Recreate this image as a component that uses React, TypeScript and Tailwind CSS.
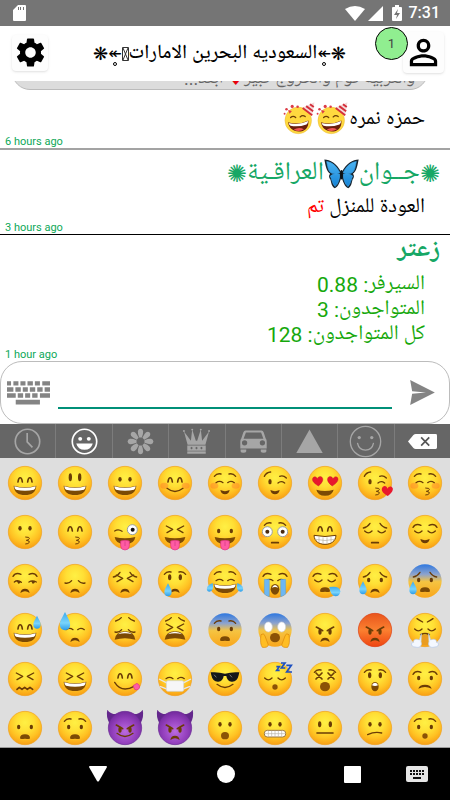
import { useState } from "react";
import type { ReactNode } from "react";
import { MdPersonOutline, MdSettings } from "react-icons/md";

const DARK = "#6b3c06";

const line = { fill: "none", stroke: DARK, strokeWidth: 4, strokeLinecap: "round" as const, strokeLinejoin: "round" as const };

const dots = (y: number, ry = 7, dx = 15) => (
  <g fill={DARK}>
    <ellipse cx={-dx} cy={y} rx="5" ry={ry} />
    <ellipse cx={dx} cy={y} rx="5" ry={ry} />
  </g>
);

const eyes: Record<string, ReactNode> = {
  arcs: <path {...line} strokeWidth="5" d="M-21 -3C-19 -20 -10 -20 -8 -3M8 -3C10 -20 19 -20 21 -3" />,
  tall: dots(-17, 12, 14),
  dots: dots(-11),
  low: dots(-3, 7, 19),
  oval: dots(-11, 9, 16),
  flat: <path {...line} d="M-27 -1Q-16 -9 -6 -1M8 -1Q17 -9 28 -1" />,
  shut: <path {...line} d="M-31 -3Q-20 8 -9 -3M9 -3Q20 8 31 -3" />,
  squint: <path {...line} d="M-26 -18L-7 -8L-24 2M26 -18L7 -8L24 2" />,
  cross: <path {...line} strokeWidth="5" d="M-27 -18L-9 0M-9 -18L-27 0M9 -18L27 0M27 -18L9 0" />,
  wink: (
    <g>
      <ellipse cx="-15" cy="-4" rx="5" ry="8" fill={DARK} />
      <path {...line} d="M9 0Q18 -8 29 0" />
    </g>
  ),
  side: (
    <g>
      <path {...line} d="M-32 3Q-22 -5 -11 4M12 3Q22 -4 34 3" />
      <path fill={DARK} d="M-25 0h13q-2 9 -8 8zM18 0h13q-2 9 -8 8z" />
    </g>
  ),
  sad: <path {...line} d="M-30 6Q-18 9 -10 -1M10 -1Q18 9 30 6" />,
  angry: (
    <g>
      {dots(5, 9, 15)}
      <path {...line} strokeWidth="5" d="M-26 -9Q-14 -3 -7 2M26 -9Q14 -3 7 2" />
    </g>
  ),
  hearts: (
    <g fill="#e8182d" stroke="#b90e20" strokeWidth="1">
      <path d="M-20 9C-35 0 -42 -9 -35 -17C-30 -22 -24 -17 -23 -13C-20 -20 -12 -22 -8 -16C-3 -8 -11 2 -20 9Z" />
      <path d="M22 9C36 0 43 -9 37 -17C32 -22 26 -17 24 -13C21 -20 13 -22 9 -16C4 -8 12 2 22 9Z" />
    </g>
  ),
  crazy: (
    <g>
      <path {...line} d="M-31 -3Q-20 -10 -9 -2" />
      <circle cx="22" cy="-7" r="15" fill="#fff" stroke="#9aa0a0" strokeWidth="3" />
      <circle cx="23" cy="-7" r="6" fill="#111" />
    </g>
  ),
  wide: (
    <g>
      <circle cx="-23" cy="-1" r="15" fill="#fff" stroke="#9aa0a0" strokeWidth="3" />
      <circle cx="23" cy="-1" r="15" fill="#fff" stroke="#9aa0a0" strokeWidth="3" />
      <circle cx="-23" cy="-1" r="6" fill="#4a2a10" />
      <circle cx="23" cy="-1" r="6" fill="#4a2a10" />
    </g>
  ),
  scared: (
    <g fill="#fff" stroke="#c9cfd8" strokeWidth="2">
      <ellipse cx="-20" cy="-9" rx="12" ry="15" />
      <ellipse cx="20" cy="-9" rx="12" ry="15" />
    </g>
  ),
};

const brows: Record<string, ReactNode> = {
  up: <path {...line} d="M-32 -20Q-24 -30 -12 -27M12 -27Q24 -30 32 -20" />,
  round: <path {...line} d="M-36 -14Q-28 -27 -12 -20M12 -20Q28 -27 36 -14" />,
  wink: <path {...line} d="M-32 -20Q-26 -32 -13 -33M14 -20Q25 -24 34 -15" />,
  sad: <path {...line} d="M-35 -12Q-23 -14 -15 -26M15 -26Q23 -14 35 -12" />,
  pain: <path {...line} d="M-28 -27Q-18 -29 -11 -37M28 -27Q18 -29 11 -37" />,
  frown: <path {...line} d="M-24 -34Q-16 -29 -7 -24M24 -34Q16 -29 7 -24" />,
};

const mouths: Record<string, ReactNode> = {
  big: (
    <g>
      <path fill="#7c4a05" d="M-34 8Q0 18 34 8C33 28 19 36 0 36C-19 36 -33 28 -34 8Z" />
      <path fill="#fff" d="M-32 10Q0 19 32 10Q32 17 27 20Q0 26 -27 20Q-32 17 -32 10Z" />
    </g>
  ),
  grin: (
    <g>
      <path fill="#fff" stroke={DARK} strokeWidth="3" d="M-33 10Q0 17 33 10C32 28 18 37 0 37C-18 37 -32 28 -33 10Z" />
      <path stroke="#b9b19f" strokeWidth="2" fill="none" d="M-29 22Q0 29 29 22M-18 14V32M-6 16V35M6 16V35M18 14V32" />
    </g>
  ),
  smile: <path {...line} d="M-24 16Q0 35 24 16" />,
  small: <path fill={DARK} d="M-14 21Q0 28 14 21Q11 34 0 34Q-11 34 -14 21Z" />,
  open: <path fill="#7c4a05" d="M-26 20Q0 28 26 20Q22 38 0 38Q-22 38 -26 20Z" />,
  kiss: <path {...line} strokeWidth="3" d="M2 15Q15 15 13 20Q11 24 4 25Q15 26 13 31Q10 36 2 36" />,
  tongue: (
    <g>
      <path fill="#7c4a05" d="M-31 15Q0 23 31 15Q28 37 0 37Q-28 37 -31 15Z" />
      <path fill="#ff5ba4" stroke="#dc3482" strokeWidth="2" d="M-13 27Q0 23 13 27V42Q12 54 0 54Q-12 54 -13 42Z" />
      <path stroke="#cf3a80" strokeWidth="2" d="M0 28V42" />
    </g>
  ),
  flat: <path {...line} strokeWidth="5" d="M-10 32H10" />,
  long: <path {...line} strokeWidth="5" d="M-24 15H24" />,
  sad: <path fill={DARK} d="M-14 36Q-12 23 0 23Q12 23 14 36Q0 26 -14 36Z" />,
  wideSad: <path fill={DARK} d="M-20 29Q-17 17 0 17Q17 17 20 29Q0 19 -20 29Z" />,
  slant: <path {...line} d="M-22 20Q0 9 20 15" />,
  o: <ellipse cy="23" rx="12" ry="11" fill="#8b5206" />,
  bigO: <ellipse cy="23" rx="15" ry="14" fill="#8b5206" />,
  tinyO: <ellipse cy="24" rx="8" ry="8" fill="#8b5206" />,
  oops: <path fill="#7c4a05" d="M-15 31Q-15 19 0 19Q15 19 15 31Q15 35 0 32Q-15 35 -15 31Z" />,
  wail: (
    <g>
      <path fill="#7c4a05" d="M-31 29Q-27 4 0 4Q27 4 31 29Q0 20 -31 29Z" />
      <path fill="#fff" d="M-22 13Q-13 5 0 5Q13 5 22 13Q0 6 -22 13Z" />
    </g>
  ),
  sob: (
    <g>
      <ellipse cy="25" rx="13" ry="16" fill="#7c4a05" />
      <path fill="#fff" d="M-10 20Q0 4 10 20Q0 16 -10 20Z" />
    </g>
  ),
  gasp: (
    <g>
      <ellipse cy="23" rx="11" ry="14" fill="#7c4a05" />
      <path fill="#fff" d="M-9 19Q-7 11 0 11Q7 11 9 19Q0 23 -9 19Z" />
    </g>
  ),
  teeth: (
    <g>
      <rect x="-32" y="7" width="64" height="20" rx="9" fill="#fff" stroke="#9a7740" strokeWidth="3" />
      <path stroke="#b9b4a8" strokeWidth="2" d="M-30 17H30M-20 8V26M-10 8V26M0 8V26M10 8V26M20 8V26" />
    </g>
  ),
  wavy: <path {...line} strokeWidth="5" d="M-24 31L-17 25L-9 31L-1 25L7 31L15 25L23 31" />,
  yum: (
    <g>
      <path {...line} d="M-31 10Q-10 43 27 22" />
      <path fill="#ff5ba4" stroke="#dc3482" strokeWidth="2" d="M24 20L36 13Q47 19 43 28Q36 36 29 31Z" />
    </g>
  ),
  line: <path {...line} strokeWidth="5" d="M-13 14Q0 7 13 14" />,
};

const drop = "M0 -20C5 -9 11 -2 11 7C11 15 6 19 0 19C-6 19 -11 15 -11 7C-11 -2 -5 -9 0 -20Z";
const heart = "M0 15C-17 5 -21 -4 -15 -12C-9 -18 -2 -14 -1 -7C3 -15 12 -16 15 -9C18 -1 9 9 0 15Z";

const extras: Record<string, ReactNode> = {
  blush: (
    <g fill="#ff6a2b" opacity=".35">
      <ellipse cx="-32" cy="8" rx="12" ry="9" />
      <ellipse cx="32" cy="8" rx="12" ry="9" />
    </g>
  ),
  heart: <path transform="translate(38 24)" d={heart} fill="#e8182d" />,
  tear: <path transform="translate(-21 27)" d={drop} fill="url(#water)" />,
  lowTear: <path transform="translate(-36 21)" d={drop} fill="url(#water)" />,
  sweatRight: <path transform="translate(36 -23)" d={drop} fill="url(#water)" />,
  sweatLeft: <path transform="translate(-30 -26) scale(1.4)" d={drop} fill="url(#water)" />,
  bubble: <path d="M13 18Q45 13 46 31Q45 46 31 46Q17 45 13 18Z" fill="url(#water)" />,
  joy: (
    <g fill="url(#water)">
      <path d="M-37 6Q-32 32 -47 32Q-58 31 -53 17Q-47 10 -37 6Z" />
      <path d="M37 6Q32 32 47 32Q58 31 53 17Q47 10 37 6Z" />
    </g>
  ),
  streams: (
    <g fill="#6cb7f3" stroke="#3e92dd" strokeWidth="1">
      <path d="M-32 -5H-17V47Q-25 45 -32 39Z" />
      <path d="M32 -5H17V47Q25 45 32 39Z" />
    </g>
  ),
  steam: (
    <g>
      <path fill="#e99c21" d="M-10 15H10V45H-10Z" />
      <path fill="#f4f8ff" stroke="#b5c9ea" strokeWidth="2" d="M-11 11L-17 30C-28 24 -37 31 -34 37C-46 39 -40 52 -29 51C-15 56 -7 44 -12 36Z" />
      <path fill="#f4f8ff" stroke="#b5c9ea" strokeWidth="2" d="M11 11L17 30C28 24 37 31 34 37C46 39 40 52 29 51C15 56 7 44 12 36Z" />
    </g>
  ),
  hands: (
    <g fill="#ffbd23" stroke="#d98709" strokeWidth="2">
      <path d="M-42 14Q-33 7 -30 18L-20 45Q-22 54 -38 52Q-46 42 -42 14Z" />
      <path d="M42 14Q33 7 30 18L20 45Q22 54 38 52Q46 42 42 14Z" />
    </g>
  ),
  mask: (
    <g>
      <path fill="none" stroke="#e5e8ec" strokeWidth="4" d="M-48 0L-22 13M48 0L22 13M-45 22L-22 31M45 22L22 31" />
      <rect x="-26" y="5" width="52" height="32" rx="5" fill="#f6f6f7" stroke="#ccd2d8" strokeWidth="2" />
    </g>
  ),
  glasses: (
    <g>
      <path fill="#15171a" d="M-43 -20Q-20 -22 0 -16Q20 -22 43 -20L41 -11Q37 9 20 8Q6 7 4 -9H-4Q-6 7 -20 8Q-37 9 -41 -11Z" />
      <path stroke="#777" strokeWidth="3" d="M-33 -13L-26 -5M14 -13L21 -5" />
    </g>
  ),
  zzz: (
    <g fill="none" stroke="#1c4fc0" strokeWidth="5">
      <path d="M4 -37H13L5 -26H14" />
      <path d="M18 -48H30L19 -33H31" />
      <path d="M34 -41H49L35 -21H51" />
    </g>
  ),
};

type Emoji = { label: string; eyes?: string; brows?: string; mouth?: string; extra?: string; skin?: "blue" | "red" | "purple" };

const emojis: Emoji[] = [
  { label: "Happy", eyes: "arcs", mouth: "big" },
  { label: "Laughing", eyes: "tall", mouth: "big" },
  { label: "Grinning", eyes: "dots", mouth: "big" },
  { label: "Smiling", eyes: "arcs", mouth: "smile", extra: "blush" },
  { label: "Relaxed", eyes: "flat", brows: "up", mouth: "small", extra: "blush" },
  { label: "Wink", eyes: "wink", brows: "wink", mouth: "small" },
  { label: "In love", eyes: "hearts", mouth: "open" },
  { label: "Blowing a kiss", eyes: "wink", brows: "wink", mouth: "kiss", extra: "heart" },
  { label: "Shy kiss", eyes: "flat", brows: "up", mouth: "kiss", extra: "blush" },

  { label: "Kiss", eyes: "dots", mouth: "kiss" },
  { label: "Happy kiss", eyes: "arcs", mouth: "kiss" },
  { label: "Crazy", eyes: "crazy", mouth: "tongue" },
  { label: "Playful", eyes: "squint", mouth: "tongue" },
  { label: "Tongue out", eyes: "low", mouth: "tongue" },
  { label: "Flushed", eyes: "wide", brows: "up", mouth: "flat", extra: "blush" },
  { label: "Beaming", eyes: "arcs", mouth: "grin" },
  { label: "Pensive", eyes: "shut", brows: "sad", mouth: "flat" },
  { label: "Relieved", eyes: "shut", brows: "round", mouth: "small" },

  { label: "Unamused", eyes: "side", brows: "round", mouth: "sad" },
  { label: "Disappointed", eyes: "sad", mouth: "sad" },
  { label: "Persevering", eyes: "squint", brows: "sad", mouth: "sad" },
  { label: "Crying", eyes: "oval", brows: "up", mouth: "sad", extra: "tear" },
  { label: "Tears of joy", eyes: "flat", brows: "up", mouth: "big", extra: "joy" },
  { label: "Sobbing", eyes: "flat", brows: "round", mouth: "sob", extra: "streams" },
  { label: "Sleepy", eyes: "shut", brows: "round", mouth: "oops", extra: "bubble" },
  { label: "Sad but relieved", eyes: "low", brows: "sad", mouth: "sad", extra: "lowTear" },
  { label: "Cold sweat", eyes: "low", brows: "sad", mouth: "oops", extra: "lowTear", skin: "blue" },

  { label: "Nervous laugh", eyes: "arcs", mouth: "big", extra: "sweatRight" },
  { label: "Downcast", eyes: "flat", mouth: "sad", extra: "sweatLeft" },
  { label: "Weary", eyes: "sad", brows: "pain", mouth: "wail" },
  { label: "Tired", eyes: "squint", brows: "pain", mouth: "wail" },
  { label: "Fearful", eyes: "low", brows: "up", mouth: "oops", skin: "blue" },
  { label: "Screaming", eyes: "scared", mouth: "bigO", extra: "hands", skin: "blue" },
  { label: "Angry", eyes: "angry", mouth: "sad" },
  { label: "Furious", eyes: "angry", mouth: "sad", skin: "red" },
  { label: "Huffing", eyes: "shut", brows: "frown", mouth: "line", extra: "steam" },

  { label: "Confounded", eyes: "squint", mouth: "wavy" },
  { label: "Laughing hard", eyes: "squint", mouth: "big" },
  { label: "Tasty", eyes: "arcs", mouth: "yum" },
  { label: "Masked", eyes: "flat", extra: "mask" },
  { label: "Cool", mouth: "smile", extra: "glasses" },
  { label: "Sleeping", eyes: "shut", mouth: "tinyO", extra: "zzz" },
  { label: "Dizzy", eyes: "cross", brows: "up", mouth: "bigO" },
  { label: "Astonished", eyes: "oval", brows: "up", mouth: "gasp" },
  { label: "Worried", eyes: "low", brows: "round", mouth: "wideSad" },

  { label: "Frowning", eyes: "low", mouth: "oops" },
  { label: "Anguished", eyes: "low", brows: "up", mouth: "oops" },
  { label: "Smiling devil", eyes: "angry", mouth: "smile", skin: "purple" },
  { label: "Angry devil", eyes: "angry", mouth: "sad", skin: "purple" },
  { label: "Open mouth", eyes: "dots", mouth: "o" },
  { label: "Grimacing", eyes: "dots", mouth: "teeth" },
  { label: "Neutral", eyes: "oval", mouth: "long" },
  { label: "Confused", eyes: "dots", mouth: "slant" },
  { label: "Hushed", eyes: "low", brows: "up", mouth: "tinyO" },
];

const fills = { yellow: "url(#yellow)", blue: "url(#blue)", red: "url(#red)", purple: "url(#purple)" };
const rims = { yellow: "#f0a01e", blue: "none", red: "#dd3d10", purple: "#6a2a94" };

function Face({ emoji }: { emoji: Emoji }) {
  const skin = emoji.skin ?? "yellow";

  return (
    <svg viewBox="-60 -60 120 120" className="size-10 overflow-visible">
      {skin === "purple" && (
        <path fill="#63268c" d="M-46 -12Q-58 -35 -53 -55Q-43 -40 -22 -42ZM46 -12Q58 -35 53 -55Q43 -40 22 -42Z" />
      )}
      <circle r="50" fill={fills[skin]} stroke={rims[skin]} strokeWidth="2" />
      {emoji.extra === "blush" && extras.blush}
      {emoji.eyes && eyes[emoji.eyes]}
      {emoji.brows && brows[emoji.brows]}
      {emoji.mouth && mouths[emoji.mouth]}
      {emoji.extra && emoji.extra !== "blush" && extras[emoji.extra]}
    </svg>
  );
}

function Gradients() {
  return (
    <svg className="absolute size-0" aria-hidden="true">
      <defs>
        <radialGradient id="yellow" cx=".5" cy=".34" r=".66">
          <stop offset="0" stopColor="#fff044" />
          <stop offset=".4" stopColor="#ffdf35" />
          <stop offset=".7" stopColor="#ffc324" />
          <stop offset="1" stopColor="#f89f14" />
        </radialGradient>
        <linearGradient id="blue" x1="0" y1="0" x2="0" y2="1">
          <stop offset="0" stopColor="#2f78e0" />
          <stop offset=".3" stopColor="#8da3cd" />
          <stop offset=".52" stopColor="#f5c442" />
          <stop offset="1" stopColor="#f9a61b" />
        </linearGradient>
        <linearGradient id="red" x1="0" y1="0" x2="0" y2="1">
          <stop offset="0" stopColor="#e8551c" />
          <stop offset=".5" stopColor="#fb8030" />
          <stop offset="1" stopColor="#ee4511" />
        </linearGradient>
        <radialGradient id="purple" cx=".5" cy=".6" r=".6">
          <stop offset="0" stopColor="#bb6be0" />
          <stop offset=".6" stopColor="#9440bd" />
          <stop offset="1" stopColor="#72299c" />
        </radialGradient>
        <linearGradient id="water" x1="0" y1="0" x2="0" y2="1">
          <stop offset="0" stopColor="#3aa9ee" />
          <stop offset=".6" stopColor="#7ad4fb" />
          <stop offset="1" stopColor="#2a9be8" />
        </linearGradient>
        <linearGradient id="wing" x1="0" y1="0" x2="0" y2="1">
          <stop offset="0" stopColor="#4cb4f2" />
          <stop offset="1" stopColor="#1583d6" />
        </linearGradient>
      </defs>
    </svg>
  );
}

function PartyFace() {
  return (
    <svg viewBox="-52 -62 104 104" className="mb-1.5 size-[33px]" role="img" aria-label="Party">
      <circle cx="-4" cy="-4" r="42" fill="#ffd93f" stroke="#d9a63a" />
      <path fill="#6b1f0c" d="M-36 2Q-4 12 28 -4C30 20 16 31 -2 31C-20 31 -34 20 -36 2Z" />
      <path fill="#fff" d="M-34 4Q-4 13 27 -2Q27 6 22 9Q-4 18 -28 13Q-33 10 -34 4Z" />
      <path fill="#f25555" d="M-18 25Q-2 16 14 24Q-2 35 -18 25Z" />
      <path {...line} d="M-28 -13Q-20 -20 -12 -13M2 -15Q10 -22 18 -16" />
      <path fill="#f4d9d9" d="M10 -45L47 -61L40 -18Z" />
      <path stroke="#d32f3a" strokeWidth="6" d="M10 -43L40 -20M21 -49L43 -33M33 -55L45 -46" />
      <g fill="#dc3b47">
        <circle cx="-23" cy="-48" r="5" />
        <circle cx="-41" cy="-39" r="4" />
        <circle cx="-6" cy="-47" r="4" />
        <circle cx="-47" cy="-25" r="3" />
        <path d="M-36 -37L-24 -34L-31 -25Z" />
      </g>
    </svg>
  );
}

function Butterfly() {
  return (
    <svg viewBox="0 0 104 88" className="h-[30px] w-[35px]" role="img" aria-label="Butterfly">
      <path fill="#16222c" d="M50 36C38 14 18 1 1 1C4 14 6 36 18 43C13 49 15 55 19 60C22 70 22 80 32 86C43 82 48 65 52 52C56 65 61 82 72 86C82 80 82 70 85 60C89 55 91 49 86 43C98 36 100 14 103 1C86 1 66 14 54 36Z" />
      <path
        fill="url(#wing)"
        stroke="#38a2ea"
        strokeWidth="2"
        d="M47 40C37 20 24 9 8 7C11 20 12 36 22 41C31 45 40 43 47 40ZM57 40C67 20 80 9 96 7C93 20 92 36 82 41C73 45 64 43 57 40ZM47 45C37 42 27 43 19 50C23 58 25 74 33 81C42 74 46 60 47 45ZM57 45C67 42 77 43 85 50C81 58 79 74 71 81C62 74 58 60 57 45Z"
      />
      <ellipse cx="52" cy="46" rx="4" ry="14" fill="#0c1116" />
    </svg>
  );
}

// arrow with a small ring hanging under it, as used around the room name
function Ornament() {
  return (
    <span className="relative font-['DejaVu_Sans',sans-serif] text-base font-normal">
      ↞
      <span className="absolute inset-x-0 bottom-0 mx-auto size-1 rounded-full border border-black" />
    </span>
  );
}

const tabs: { name: string; icon: ReactNode }[] = [
  {
    name: "Recent",
    icon: (
      <g fill="none" stroke="currentColor" strokeWidth="5">
        <circle cx="50" cy="50" r="37" />
        <path d="M49 24V51L65 68" />
      </g>
    ),
  },
  {
    name: "People",
    icon: (
      <g>
        <circle cx="50" cy="50" r="37" fill="none" stroke="currentColor" strokeWidth="5" />
        <circle cx="37" cy="42" r="6" fill="currentColor" />
        <circle cx="63" cy="42" r="6" fill="currentColor" />
        <path fill="currentColor" d="M25 56H75Q70 75 50 75Q30 75 25 56Z" />
      </g>
    ),
  },
  {
    name: "Nature",
    icon: (
      <g fill="currentColor">
        {[0, 45, 90, 135, 180, 225, 270, 315].map((angle) => (
          <path key={angle} d="M46 38Q41 25 42 18Q44 11 50 11Q56 11 58 18Q59 25 54 38Z" transform={`rotate(${angle} 50 50)`} />
        ))}
      </g>
    ),
  },
  {
    name: "Objects",
    icon: (
      <g fill="currentColor">
        <path d="M23 60L12 20L33 48L37 14L48 48H52L63 14L67 48L88 20L77 60Z" />
        <circle cx="12" cy="18" r="3" />
        <circle cx="37" cy="14" r="3" />
        <circle cx="63" cy="14" r="3" />
        <circle cx="88" cy="18" r="3" />
        <path fillRule="evenodd" d="M22 62H78V78H22ZM35 66L31 70L35 74L39 70ZM50 66L46 70L50 74L54 70ZM65 66L61 70L65 74L69 70Z" />
        <path d="M22 80H78V87H22Z" />
      </g>
    ),
  },
  {
    name: "Places",
    icon: (
      <path
        fill="currentColor"
        fillRule="evenodd"
        d="M26 17H74Q79 17 81 23L87 41Q90 44 90 50V71H10V50Q10 44 13 41L19 23Q21 17 26 17ZM27 23L20 42H80L73 23ZM23 46A8 8 0 1 0 23 62A8 8 0 1 0 23 46ZM77 46A8 8 0 1 0 77 62A8 8 0 1 0 77 46ZM11 74H28V80Q27 84 19 84Q12 84 11 80ZM72 74H89V80Q88 84 81 84Q73 84 72 80Z"
      />
    ),
  },
  { name: "Symbols", icon: <path fill="currentColor" d="M50 14L90 85H10Z" /> },
  {
    name: "Stickers",
    icon: (
      <g>
        <circle cx="50" cy="50" r="46" fill="none" stroke="currentColor" strokeWidth="4" />
        <circle cx="31" cy="38" r="5" fill="currentColor" />
        <circle cx="69" cy="38" r="5" fill="currentColor" />
        <path fill="none" stroke="currentColor" strokeWidth="4" strokeLinecap="round" d="M26 56Q30 76 50 76Q70 76 74 56" />
      </g>
    ),
  },
];

function Ago({ children }: { children: string }) {
  return <time className="block pl-[5px] text-[11px] leading-3 text-[#0da858]">{children}</time>;
}

function StatusBar() {
  return (
    <div className="flex h-[26px] shrink-0 items-center justify-between bg-[#757575] pr-2.5 pl-[13px] text-white">
      <svg viewBox="0 0 13 16" className="h-4 w-[13px]">
        <path fill="currentColor" fillRule="evenodd" d="M5 0H12Q13 0 13 1V15Q13 16 12 16H1Q0 16 0 15V5ZM5 2V5H6V2ZM7 2V5H8V2ZM10 2V5H11V2Z" />
      </svg>
      <div className="flex items-center gap-[3px]">
        <svg viewBox="0 0 20 15" className="h-[15px] w-5">
          <path fill="currentColor" d="M0 3Q10 -3 20 3L10 15Z" />
        </svg>
        <svg viewBox="0 0 15 15" className="h-[15px] w-[15px]">
          <path fill="currentColor" d="M15 0V15H0Z" />
        </svg>
        <svg viewBox="0 0 10 16" className="ml-1.5 h-4 w-2.5">
          <path fill="currentColor" fillRule="evenodd" d="M3 0H7V2H9Q10 2 10 3V15Q10 16 9 16H1Q0 16 0 15V3Q0 2 1 2H3ZM6 4L2 10H5L4 14L8 8H5Z" />
        </svg>
        <span className="ml-1 text-base leading-5 font-medium">7:31</span>
      </div>
    </div>
  );
}

export default function App() {
  const [text, setText] = useState("");
  const [tab, setTab] = useState("People");

  return (
    <div className="flex h-screen flex-col overflow-hidden bg-white font-[Roboto,'Noto_Naskh_Arabic_UI','Noto_Naskh_Arabic','DejaVu_Sans',sans-serif]">
      <Gradients />
      <StatusBar />

      <header className="flex h-[55px] shrink-0 items-center justify-between pr-1.5 pb-0.5 pl-3">
        <button aria-label="Settings" className="flex size-9 items-center justify-center rounded-sm bg-[#fdfdfd] shadow">
          <MdSettings className="size-[35px]" />
        </button>
        <h1 dir="rtl" className="flex items-center pt-0.5 pr-3 text-xl leading-6 font-medium text-black">
          <span className="font-['DejaVu_Sans',sans-serif] text-lg">❋</span>
          <Ornament />
          السعوديه البحرين الامارات
          <svg viewBox="0 0 7 14" className="h-3.5 w-[7px]">
            <path fill="none" stroke="#333" strokeWidth="1" d="M.5 .5H6.5V13.5H.5ZM1 1L6 13M6 1L1 13" />
          </svg>
          <Ornament />
          <span className="font-['DejaVu_Sans',sans-serif] text-lg">❋</span>
        </h1>
        <div className="relative">
          <button aria-label="Profile" className="flex size-[41px] items-center justify-center rounded-sm bg-[#fdfdfd] shadow">
            <MdPersonOutline className="size-[41px]" />
          </button>
          <span className="absolute -top-[5px] -left-7 flex size-[33px] items-center justify-center rounded-full border border-black bg-[#90ee90] text-[13px] text-[#444]">
            1
          </span>
        </div>
      </header>

      <main className="flex min-h-0 flex-1 flex-col justify-end overflow-hidden">
        <article className="shrink-0 border-b-2 border-[#a3a3a3]">
          <div dir="rtl" className="mr-[22px] ml-3 h-9 overflow-hidden rounded-3xl border border-[#bbb] bg-[#dcdcdc] px-3 pt-3 text-lg leading-6 whitespace-nowrap text-[#666]">
            والعربيه كوم والخروج كبير<span className="text-red-600">♥</span> ابعد...
          </div>
          <p dir="rtl" className="flex h-[46px] items-center pt-4 pr-[25px] text-[21px] text-black">
            حمزه نمره <PartyFace />
            <PartyFace />
          </p>
          <Ago>6 hours ago</Ago>
        </article>

        <article className="shrink-0 border-b border-black">
          <h2 dir="rtl" className="flex h-[42px] items-center pt-1.5 pr-2.5 text-[26px] text-[#16a765]">
            <span className="font-['DejaVu_Sans',sans-serif] text-2xl">✺</span>
            جــوان
            <Butterfly />
            العراقـية
            <span className="font-['DejaVu_Sans',sans-serif] text-2xl">✺</span>
          </h2>
          <p dir="rtl" className="h-[30px] pr-[25px] text-[21px] leading-8 text-black">
            العودة للمنزل <span className="text-[#ff0000]">تم</span>
          </p>
          <Ago>3 hours ago</Ago>
        </article>

        <article className="shrink-0">
          <h2 dir="rtl" className="pr-2.5 pb-1.5 text-[26px] leading-8 font-bold text-[#16a765]">زعتر</h2>
          <div dir="rtl" className="pr-[25px] pb-px text-[21px] leading-[25px] text-[#16a80c]">
            <p>السيرفر: 0.88</p>
            <p>المتواجدون: 3</p>
            <p>كل المتواجدون: 128</p>
          </div>
          <Ago>1 hour ago</Ago>
        </article>
      </main>

      <form
        onSubmit={(e) => e.preventDefault()}
        className="flex h-[63px] shrink-0 items-center rounded-[22px] border border-[#bcbcbc] pr-3.5 pl-1.5"
      >
        <button type="button" aria-label="Keyboard" className="text-[#848484]">
          <svg viewBox="0 0 128 70" className="h-6 w-[43px]">
            <path
              fill="currentColor"
              d="M0 0H12V13H0ZM19 0H34V13H19ZM40 0H55V13H40ZM61 0H77V13H61ZM83 0H98V13H83ZM105 0H128V13H105ZM0 18H19V31H0ZM25 18H41V31H25ZM47 18H62V31H47ZM68 18H84V31H68ZM90 18H106V31H90ZM112 18H128V31H112ZM0 36H26V49H0ZM32 36H48V49H32ZM54 36H69V49H54ZM75 36H91V49H75ZM98 36H128V49H98ZM26 55H98V69H26Z"
            />
          </svg>
        </button>
        <input
          aria-label="Message"
          dir="auto"
          value={text}
          onChange={(e) => setText(e.target.value)}
          className="mx-2 h-8 min-w-0 flex-1 border-b-2 border-[#009078] text-lg outline-none"
        />
        <button aria-label="Send" className="ml-2.5 text-[#848484]">
          <svg viewBox="0 0 75 76" className="h-[25px] w-[25px]">
            <path fill="currentColor" d="M0 0L75 38L0 76L6 42L48 38L6 34Z" />
          </svg>
        </button>
      </form>

      <nav className="flex h-[34px] shrink-0 bg-[#666]">
        {tabs.map((t) => (
          <button
            key={t.name}
            aria-label={t.name}
            onClick={() => setTab(t.name)}
            className={`flex flex-1 items-center justify-center border-r border-[#7c7c7c] ${tab === t.name ? "text-white" : "text-[#a6a6a6]"}`}
          >
            <svg viewBox="0 0 100 100" className="size-[33px]">
              {t.icon}
            </svg>
          </button>
        ))}
        <button aria-label="Delete" className="flex flex-1 items-center justify-center text-white">
          <svg viewBox="0 0 86 44" className="h-[15px] w-[29px]">
            <path fill="currentColor" d="M0 22L16 3Q19 0 23 0H82Q86 0 86 4V40Q86 44 82 44H23Q19 44 16 41Z" />
            <path stroke="#555" strokeWidth="5" d="M39 10L63 34M63 10L39 34" />
          </svg>
        </button>
      </nav>

      <div className="grid h-[289px] shrink-0 auto-rows-[49px] grid-cols-9 overflow-hidden bg-[#dedede]">
        {emojis.map((emoji) => (
          <button key={emoji.label} aria-label={emoji.label} className="flex items-center justify-center">
            <Face emoji={emoji} />
          </button>
        ))}
      </div>

      <footer className="flex h-[53px] shrink-0 items-center border-t border-[#999] bg-black pr-[22px] pl-[89px] text-white">
        <div className="mr-[45px] flex flex-1 items-center justify-between">
          <button aria-label="Back">
            <svg viewBox="0 0 18 16" className="h-4 w-[18px]">
              <path fill="currentColor" d="M1 0H17Q18 0 18 1L10 15Q9 16 8 15L0 1Q0 0 1 0Z" />
            </svg>
          </button>
          <button aria-label="Home" className="size-[18px] rounded-full bg-white" />
          <button aria-label="Overview" className="size-[17px] rounded-[1px] bg-white" />
        </div>
        <button aria-label="Change keyboard" className="text-[#e6e6e6]">
          <svg viewBox="0 0 22 16" className="h-4 w-[22px]">
            <rect width="22" height="16" rx="2" fill="currentColor" />
            <path stroke="#111" strokeWidth="2" strokeDasharray="2 1" d="M4 5H18M4 8H18" />
            <path stroke="#111" strokeWidth="2" d="M7 12H15" />
          </svg>
        </button>
      </footer>
    </div>
  );
}
